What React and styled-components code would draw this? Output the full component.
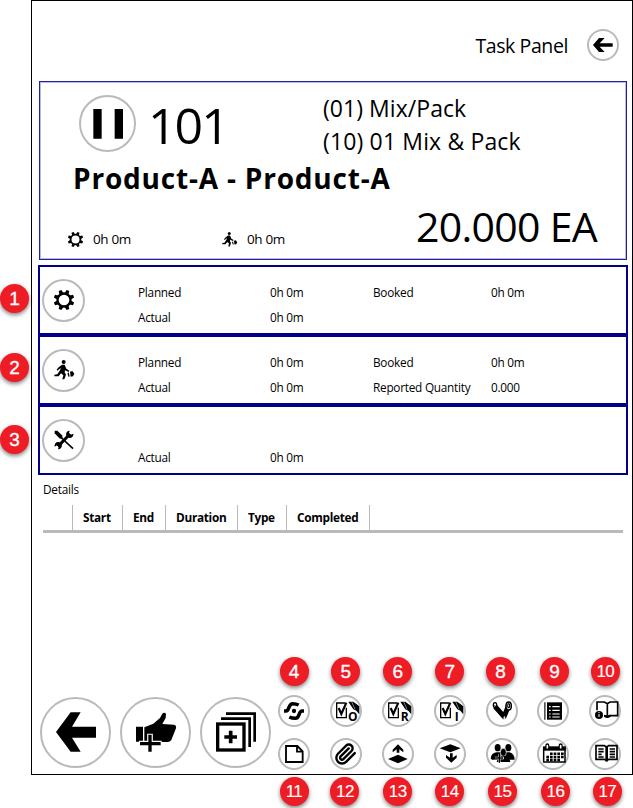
import React from "react";
import styled, { createGlobalStyle } from "styled-components";

const Global = createGlobalStyle`
  * { box-sizing: border-box; }
  body { margin: 0; background: #fff; color: #000; font-family: "Open Sans", "Noto Sans", sans-serif; }
  svg { display: block; flex: none; }
`;

const Page = styled.div`
  width: 633px;
  height: 808px;
  padding-left: 31px;
  overflow: hidden;
`;
const Frame = styled.main`
  width: 602px;
  height: 775px;
  border: 1px solid #000;
  display: flex;
  flex-direction: column;
`;
const Header = styled.header`
  height: 80px;
  padding: 8px 13px 0 0;
  display: flex;
  align-items: center;
  justify-content: flex-end;
  gap: 19px;
`;
const Text = styled.span`
  display: block;
  white-space: nowrap;
  font-size: ${(p) => p.$size || 12}px;
  line-height: ${(p) => p.$line || 25}px;
  letter-spacing: ${(p) => p.$track || 0}px;
  font-weight: ${(p) => (p.$bold ? 700 : 400)};
`;
const Round = styled.div`
  flex: none;
  width: ${(p) => p.$d}px;
  height: ${(p) => p.$d}px;
  border: ${(p) => p.$line || 1.5}px solid #bababa;
  border-radius: 50%;
  background: #fff;
  display: flex;
  align-items: center;
  justify-content: center;
`;

const Summary = styled.section`
  width: 588px;
  height: 179px;
  margin-left: 7px;
  border: 1px solid #2222a0;
  box-shadow: inset 0 0 0 1px #b9b9e0;
  padding: 12px 29px 0 26px;
  display: grid;
  grid-template-columns: 249px 1fr;
  grid-template-rows: 64px 40px 1fr;
`;
const Job = styled.div`
  display: flex;
  align-items: flex-start;
  padding: 1px 0 0 13px;
  gap: 12px;
`;
const Operation = styled.div`
  margin-top: -2px;
  padding: 0 0 0 8px;
`;
const Product = styled.div`
  grid-column: 1 / 3;
  padding-left: 7px;
`;
const Times = styled.div`
  display: flex;
  padding: 29px 0 0 2px;
`;
const Time = styled.div`
  flex: none;
  width: 154px;
  height: 25px;
  display: flex;
  align-items: center;
  gap: 10px;
`;
const Quantity = styled.div`
  display: flex;
  justify-content: flex-end;
`;

const Sections = styled.div`
  width: 590px;
  margin: 5px 0 0 6px;
`;
const Section = styled.section`
  position: relative;
  height: 70px;
  border: 2px solid #00008b;
  padding: 0 0 0 2px;
  display: grid;
  grid-template-columns: 96px 1fr;
  align-items: center;
`;
const Facts = styled.div`
  display: grid;
  grid-template-columns: 132px 103px 118px 1fr;
  grid-template-rows: 25px 25px;
  padding-top: 10px;
`;

const Details = styled.section`
  padding: 2px 9px 0 11px;
  height: 220px;
`;
const HeadRow = styled.div`
  display: flex;
  height: 28px;
  margin-top: 3px;
  border-bottom: 3px solid #bababa;
`;
const HeadCell = styled.div`
  width: ${(p) => p.$w}px;
  padding-left: 10px;
  border-right: 1px solid #bababa;
`;

const Toolbar = styled.footer`
  display: flex;
  padding: 0 0 0 8px;
  align-items: center;
`;
const BigButtons = styled.div`
  display: flex;
  gap: 9px;
`;
const SmallButtons = styled.div`
  display: grid;
  grid-template-columns: repeat(7, 32px);
  column-gap: 19.9px;
  row-gap: 10.5px;
  margin-left: 7px;
`;
const Item = styled.div`
  position: relative;
`;
const Badge = styled.span`
  position: absolute;
  left: ${(p) => p.$x}px;
  top: ${(p) => p.$y}px;
  width: 29px;
  height: 29px;
  border-radius: 50%;
  background: #ee1c25;
  color: #fff;
  font: ${(p) => (p.$two ? 17 : 19)}px/29px "Liberation Sans", Arial, sans-serif;
  letter-spacing: ${(p) => (p.$two ? -0.5 : 0)}px;
  -webkit-text-stroke: ${(p) => (p.$two ? 0.15 : 0.35)}px #fff;
  text-align: center;
  box-shadow: 0 2px 4px rgba(0, 0, 0, 0.5);
`;

/* Drawings use three units per pixel, centred on the origin. */
const Art = ({ s, scale = 1, children }) => (
  <svg width={s * scale} height={s * scale} viewBox={`${-s * 1.5} ${-s * 1.5} ${s * 3} ${s * 3}`} overflow="visible">
    {children}
  </svg>
);
const line = (w) => ({ fill: "none", stroke: "#000", strokeWidth: w });

const Gear = ({ scale }) => (
  <Art s={20} scale={scale}>
    <circle r="19.5" {...line(7)} />
    {[0, 1, 2, 3, 4, 5, 6, 7].map((i) => (
      <path key={i} transform={`rotate(${22.5 + i * 45})`} d="M-6 -21 L-4.5 -31 H4.5 L6 -21Z" />
    ))}
  </Art>
);
const Worker = ({ scale }) => (
  <Art s={20} scale={scale}>
    <circle cx="-1" cy="-24" r="6" />
    <path d="M-6 -16 L2 -16 L7 -4 L16 2 L14 6 L3 1 L2 7 L6 14 L1 28 L-5 28 L-2 16 L-9 10 L-16 19 L-29 19 L-29 14 L-20 13 L-13 2 L-9 -6 L-15 -2 L-19 2 L-22 -1 L-16 -8Z" />
    <path d="M10 11 L14 7 L17 19 L14 21Z M18 5 L25 3 L31 11 L27 19 L20 20Z" />
  </Art>
);
const Tools = () => (
  <Art s={20}>
    <path d="M-28 -28 L-20 -28 L-6 -14 L-4 -7 L-8 -3 L-14 -5 L-28 -20Z" />
    <path d="M-7 -6 L27 26" {...line(5)} />
    <path d="M-18 19 L18 -18" {...line(9)} />
    <path d="M28 -19 A11 11 0 1 1 17 -28 L15 -21 L20 -16Z M-28 20 A11 11 0 1 1 -18 28 L-16 21 L-21 16Z" />
  </Art>
);
const HeaderArrow = () => (
  <Art s={20}><path d="M-30 0 L-12 -21 H5 L-10 -5 H29 V5 H-10 L5 21 H-12Z" /></Art>
);
const Pause = () => (
  <Art s={40}><path d="M-44 -45h25v89h-25z M20 -45h25v89h-25z" /></Art>
);
const BigArrow = () => (
  <Art s={44}><path d="M-60 0 L-16 -59 H14 L-12 -16 H60 V17 H-12 L14 59 H-16Z" /></Art>
);
const Thumb = () => (
  <Art s={44}>
    <path d="M-60 -16h21v45h-21z M-35 -14 L-8 -25 L12 -42 L19 -55 Q24 -61 30 -55 L29 -42 L19 -24 L54 -22 Q62 -20 60 -11 L46 24 Q42 31 32 30 L-35 29Z" />
    <path d="M-51 35 H17 M-18 5 V62" stroke="#fff" strokeWidth="17" />
    <path d="M-48 35 H14 M-18 8 V59" {...line(10)} />
  </Art>
);
const AddCopies = () => (
  <Art s={44}>
    <path d="M-30 -55 H56 V29 M-45 -40 H41 V45" {...line(8)} />
    <rect x="-55" y="-24" width="79" height="78" {...line(10)} />
    <path d="M-35 15 H3 M-16 -4 V34" {...line(11)} />
  </Art>
);

const Sync = () => (
  <Art s={24}>
    <circle r="6.5" />
    <path d="M-30 0 H-24 C-13 0 -18 -22 -4 -22 Q6 -22 14 -18 M30 0 H24 C13 0 18 22 4 22 Q-6 22 -14 18" {...line(10.5)} />
  </Art>
);
const Check = ({ letter }) => (
  <Art s={24}>
    <path d="M-3 -24 H-28 V20 H1 V-10" {...line(4)} />
    <path d="M-22 -9 L-14 9 L1 -25" {...line(6.5)} />
    <path d="M7 -28 H22 L40 -14 V10 L31 -1 L22 -5Z" />
    <path d="M17 -28 L27 -5" stroke="#fff" strokeWidth="1.5" />
    <text x="20" y="31" textAnchor="middle" fontFamily="Open Sans, sans-serif" fontWeight="700" fontSize="36">{letter}</text>
  </Art>
);
const Steam = () => (
  <Art s={24}>
    <path d="M-21 -14 L6 17 L19 -14" {...line(15)} strokeLinejoin="round" />
    <ellipse cx="-21" cy="-18" rx="5" ry="7" {...line(4)} fill="#fff" />
    <ellipse cx="20" cy="-15" rx="8" ry="12" {...line(4.5)} fill="#fff" />
    <ellipse cx="20" cy="-16" rx="3" ry="6" {...line(3.5)} />
    <ellipse cx="7" cy="20" rx="3" ry="4" fill="#fff" />
    <path d="M-22 -17 L6 19" {...line(3)} />
  </Art>
);
const ListIcon = () => (
  <Art s={24}>
    <path d="M-24.5 -26 V26" stroke="#555" strokeWidth="5" />
    <rect x="-18" y="-26" width="45" height="52" />
    <path d="M-12 -13H-7 M-2 -13H20 M-12 -2H-7 M-2 -2H20 M-12 9H-7 M-2 9H20 M-12 18H-7 M-2 18H20" stroke="#fff" strokeWidth="3.5" />
  </Art>
);
const BookInfo = () => (
  <Art s={24}>
    <path d="M-24 -2 V-27 H-2 L7 -22 L15 -27 H38 V14 H14 L7 18 L-2 14 M7 -22 V15" {...line(5)} />
    <path d="M-3 11 L7 14 L17 11 V18 L7 21 L-3 18Z" />
    <circle cx="-18" cy="12" r="12" />
    <path d="M-18 9 V18 M-18 3 V6" stroke="#fff" strokeWidth="3" />
  </Art>
);
const Doc = () => (
  <Art s={24}>
    <path d="M-24 -24 H10 L26 -8 V24 H-24Z M9 -24 V-7 H26" {...line(5.5)} />
  </Art>
);
const Clip = () => (
  <Art s={24}>
    <g transform="scale(2.85) translate(-12.2 -12)">
      <path d="M21.44 11.05l-9.19 9.19a6 6 0 0 1-8.49-8.49l8.57-8.57A4 4 0 1 1 18 8.84l-8.59 8.57a2 2 0 0 1-2.83-2.83l8.49-8.48" {...line(2.5)} strokeLinecap="round" />
    </g>
  </Art>
);
const Raise = () => (
  <Art s={24}><path d="M-30 15 L0 2 L29 15 L0 28Z M0 -29 L16 -13 V-5 L4 -14 V-4 H-4 V-14 L-16 -5 V-13Z" /></Art>
);
const Lower = () => (
  <Art s={24}><path d="M-31 -17 L1 -29 L32 -17 L1 -5Z M4 26 L-12 11 V3 L0 11 V-2 H8 V11 L20 3 V11Z" /></Art>
);
const People = () => (
  <Art s={24}>
    <ellipse cx="-13" cy="-19" rx="9" ry="11" />
    <ellipse cx="19" cy="-19" rx="9" ry="11" />
    <path d="M-34 14 Q-33 -2 -17 -5 H23 Q37 -1 38 17 H-30Z" />
    <ellipse cx="4" cy="-5" rx="9" ry="12" stroke="#fff" strokeWidth="2" />
    <path d="M-16 24 Q-12 8 2 6 H8 Q24 9 25 24Z" />
    <path d="M-22 12 H6 M-8 0 V27" stroke="#fff" strokeWidth="7" />
    <path d="M-25 12 H4 M-8 -2 V26" {...line(4.5)} />
  </Art>
);
const CalendarIcon = () => (
  <Art s={24}>
    <path d="M-28 -20 H36 V24 H-28Z" {...line(4.5)} />
    <path d="M-30 -22 H38 V-10 H-30Z" />
    <path d="M-17 -26 V-18 M23 -26 V-18" stroke="#000" strokeWidth="12" strokeLinecap="round" />
    <path d="M-17 -25 V-19 M23 -25 V-19" stroke="#fff" strokeWidth="5" strokeLinecap="round" />
    <path d="M-9 -1 H32 M-20 9 H32 M-20 18 H24" {...line(7.5)} strokeDasharray="8 3" />
  </Art>
);
const BookText = () => (
  <Art s={24}>
    <path d="M-27 -25 H-2 L5 -21 L11 -25 H36 V16 H11 L5 20 L-2 16 H-27Z" {...line(5)} />
    <path d="M5 -21 V22" {...line(8)} />
    <path d="M-20 -15 H-4 M-20 -7 H-4 M-20 1 H-10 M-20 9 H-4 M14 -15 H30 M14 -7 H30 M14 1 H30 M14 9 H30" {...line(5)} />
  </Art>
);

const tools = [
  [4, <Sync />, 0], [5, <Check letter="O" />, 0], [6, <Check letter="R" />, 0], [7, <Check letter="I" />, 0],
  [8, <Steam />, -1], [9, <ListIcon />, 1], [10, <BookInfo />, 0],
  [11, <Doc />, 0], [12, <Clip />, -1], [13, <Raise />, 0], [14, <Lower />, 0],
  [15, <People />, 1], [16, <CalendarIcon />, 2], [17, <BookText />, 2],
];
const sections = [
  { icon: <Gear />, badge: 17, facts: ["Planned", "0h 0m", "Booked", "0h 0m", "Actual", "0h 0m", "", ""] },
  { icon: <Worker />, badge: 16, facts: ["Planned", "0h 0m", "Booked", "0h 0m", "Actual", "0h 0m", "Reported Quantity", "0.000"] },
  { icon: <Tools />, badge: 18, facts: ["", "", "", "", "Actual", "0h 0m", "", ""] },
];
const columns = [["", 30], ["Start", 50], ["End", 43], ["Duration", 72], ["Type", 49], ["Completed", 83]];

export default function App() {
  return (
    <Page>
      <Global />
      <Frame>
        <Header>
          <Text $size={19.5} $track={-0.4}>Task Panel</Text>
          <Round $d={32} $line={2}><HeaderArrow /></Round>
        </Header>
        <Summary>
          <Job>
            <Round $d={57} $line={2}><Pause /></Round>
            <Text $size={50} $line={60} $track={-2}>101</Text>
          </Job>
          <Operation>
            <Text $size={23} $line={33} $track={0.05}>(01) Mix/Pack</Text>
            <Text $size={23} $line={33} $track={0.15}>(10) 01 Mix &amp; Pack</Text>
          </Operation>
          <Product><Text $size={28} $line={40} $track={0.8} $bold>Product-A - Product-A</Text></Product>
          <Times>
            <Time><Gear scale={0.75} /><Text $size={13.5} $track={-0.35}>0h 0m</Text></Time>
            <Time><Worker scale={0.75} /><Text $size={13.5} $track={-0.35}>0h 0m</Text></Time>
          </Times>
          <Quantity><Text $size={41} $line={56} $track={-0.7}>20.000 EA</Text></Quantity>
        </Summary>
        <Sections>
          {sections.map((s, i) => (
            <Section key={i}>
              <Round $d={43} $line={2}>{s.icon}</Round>
              <Facts>{s.facts.map((f, j) => <Text key={j} $size={11.8} $track={-0.25}>{f}</Text>)}</Facts>
              <Badge $x={-40} $y={s.badge}>{i + 1}</Badge>
            </Section>
          ))}
        </Sections>
        <Details>
          <Text $size={11.8} $track={-0.25}>Details</Text>
          <HeadRow>
            {columns.map(([name, w]) => (
              <HeadCell key={w} $w={w}><Text $size={11.8} $track={-0.3} $bold>{name}</Text></HeadCell>
            ))}
          </HeadRow>
        </Details>
        <Toolbar>
          <BigButtons>
            <Round $d={71} $line={2}><BigArrow /></Round>
            <Round $d={71} $line={2}><Thumb /></Round>
            <Round $d={71} $line={2}><AddCopies /></Round>
          </BigButtons>
          <SmallButtons>
            {tools.map(([n, icon, dx], i) => (
              <Item key={n}>
                <Round $d={32} $line={2}>{icon}</Round>
                <Badge $two={n > 9} $x={1.5 + dx} $y={i < 7 ? -38.5 : 39}>{n}</Badge>
              </Item>
            ))}
          </SmallButtons>
        </Toolbar>
      </Frame>
    </Page>
  );
}
